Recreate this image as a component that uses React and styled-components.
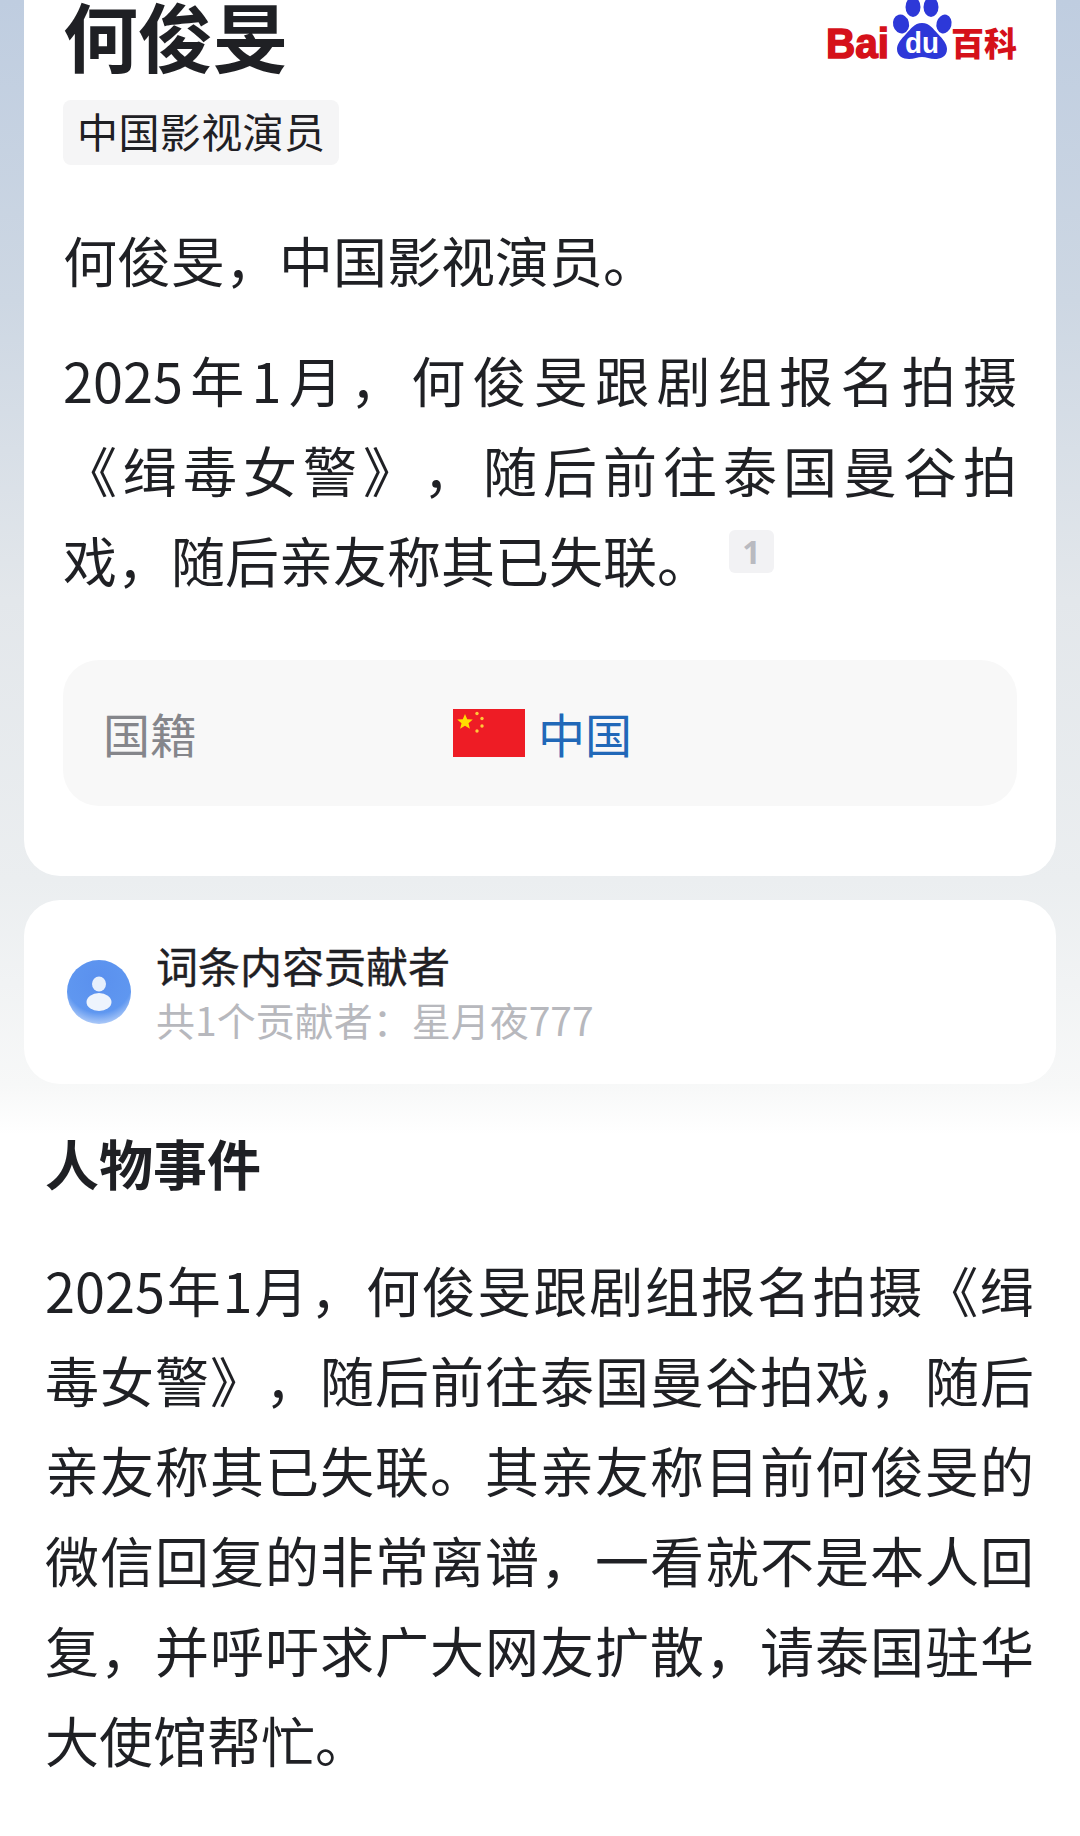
import styled, { createGlobalStyle } from "styled-components";

const GlobalStyle = createGlobalStyle`
  html, body {
    margin: 0;
    padding: 0;
    background: #fff;
  }
  body {
    font-family: "Noto Sans CJK SC", "Noto Sans", sans-serif;
    color: #1f2024;
    text-spacing-trim: space-all;
  }
`;

const Page = styled.div`
  width: 1080px;
  height: 1836px;
  overflow: hidden;
  background: linear-gradient(
    180deg,
    #bfcde0 0,
    #cdd7e3 300px,
    #e3e7eb 600px,
    #ebeef0 880px,
    #f7f8f8 1085px,
    #ffffff 1135px
  );
`;

const Cards = styled.div`
  padding: 0 24px;
  display: flex;
  flex-direction: column;
  gap: 24px;
`;

const Card = styled.section`
  background: #fff;
  border-radius: 0 0 36px 36px;
  padding: 0 39px 70px;
`;

const Header = styled.div`
  display: flex;
  justify-content: space-between;
  align-items: flex-start;
`;

const Title = styled.h1`
  margin: 0;
  font-size: 75px;
  line-height: 70px;
  font-weight: 700;
`;

const Tag = styled.span`
  display: inline-block;
  margin-top: 30px;
  height: 65px;
  line-height: 60px;
  padding: 0 14px;
  border-radius: 8px;
  background: #f5f5f6;
  font-size: 41px;
  letter-spacing: 0.4px;
  vertical-align: top;
`;

const TagRow = styled.div`
  height: 95px;
`;

const Text = styled.div`
  margin-top: ${(p) => p.$top || 0}px;
  font-size: 54px;
`;

const Line = styled.div`
  height: 90px;
  line-height: 90px;
  white-space: nowrap;
  text-align: justify;
  text-align-last: ${(p) => (p.$last ? "left" : "justify")};
`;

const Ref = styled.span`
  display: inline-block;
  width: 45px;
  height: 43px;
  margin-left: 18px;
  border-radius: 6px;
  background: #f2f2f4;
  color: #b9bac0;
  font-family: "Open Sans", sans-serif;
  font-size: 32px;
  font-weight: 700;
  line-height: 43px;
  text-align: center;
  text-align-last: center;
  vertical-align: 19px;
`;

const InfoBox = styled.div`
  margin-top: 55px;
  height: 146px;
  border-radius: 36px;
  background: #f8f8f8;
  display: grid;
  grid-template-columns: 350px 1fr;
  align-items: center;
  padding-left: 40px;
  font-size: 47px;
  line-height: 60px;
`;

const InfoLabel = styled.span`
  color: #85868b;
`;

const InfoValue = styled.span`
  display: flex;
  align-items: center;
  gap: 13px;
  color: #2168b8;
`;

const ContributorCard = styled.section`
  background: #fff;
  border-radius: 36px;
  height: 184px;
  display: flex;
  align-items: center;
  gap: 25px;
  padding-left: 43px;
`;

const ContributorText = styled.div`
  display: flex;
  flex-direction: column;
`;

const ContributorTitle = styled.div`
  font-size: 42px;
  line-height: 54px;
  -webkit-text-stroke: 0.4px #1f2024;
`;

const ContributorSub = styled.div`
  font-size: 39px;
  line-height: 54px;
  color: #b7b8bd;
`;

const Section = styled.section`
  padding: 44px 46px 0 45px;
`;

const SectionTitle = styled.h2`
  margin: 0;
  font-size: 54px;
  line-height: 70px;
  font-weight: 700;
`;

const Flag = () => (
  <svg width="72" height="48" viewBox="0 0 72 48">
    <rect width="72" height="48" fill="#ee1c25" />
    <polygon
      points="12,5 14.2,10.2 19.8,10.6 15.5,14.2 16.9,19.7 12,16.7 7.1,19.7 8.5,14.2 4.2,10.6 9.8,10.2"
      fill="#ffde00"
    />
    <g fill="#ffc93a">
      <circle cx="24" cy="4.5" r="1.7" />
      <circle cx="29" cy="9.5" r="1.7" />
      <circle cx="29" cy="17" r="1.7" />
      <circle cx="24" cy="22" r="1.7" />
    </g>
  </svg>
);

const BaiduLogo = () => (
  <svg width="191" height="60" viewBox="0 0 191 60">
    <text
      x="0"
      y="58"
      fontFamily="Liberation Sans, sans-serif"
      fontWeight="700"
      fontSize="43"
      fill="#d5111a"
      stroke="#d5111a"
      strokeWidth="1.6"
      textLength="63"
      lengthAdjust="spacingAndGlyphs"
    >
      Bai
    </text>
    <g fill="#2d38d8">
      <ellipse cx="75" cy="24" rx="8" ry="9.5" transform="rotate(-15 75 24)" />
      <ellipse cx="87" cy="7" rx="7.5" ry="10" />
      <ellipse cx="105" cy="7" rx="7.5" ry="10" />
      <ellipse cx="118" cy="24" rx="7.5" ry="9.5" transform="rotate(15 118 24)" />
      <path d="M96 23c8 0 11 6 16 11 5 5 9 10 9 15 0 8-7 10-12 10-5 0-9-2-13-2s-8 2-13 2c-6 0-12-3-12-10 0-5 4-10 9-15 5-5 8-11 16-11z" />
    </g>
    <text
      x="96"
      y="53"
      fontFamily="Liberation Sans, sans-serif"
      fontWeight="700"
      fontSize="29"
      fill="#fff"
      textAnchor="middle"
      textLength="34"
      lengthAdjust="spacingAndGlyphs"
    >
      du
    </text>
    <text
      x="125"
      y="56"
      fontFamily="Noto Sans CJK SC, sans-serif"
      fontWeight="900"
      fontSize="33"
      fill="#d5111a"
    >
      百科
    </text>
  </svg>
);

const Avatar = () => (
  <svg width="64" height="64" viewBox="0 0 64 64">
    <defs>
      <radialGradient id="avatarFill" cx="50%" cy="30%" r="75%">
        <stop offset="0" stopColor="#5a90ee" />
        <stop offset="0.7" stopColor="#5f97f0" />
        <stop offset="1" stopColor="#c3d8fa" />
      </radialGradient>
    </defs>
    <circle cx="32" cy="32" r="32" fill="url(#avatarFill)" />
    <ellipse cx="32" cy="24" rx="7" ry="7.5" fill="#e6effc" />
    <ellipse cx="32" cy="42" rx="12.5" ry="9" fill="#eef4fd" />
  </svg>
);

export default function App() {
  return (
    <>
      <GlobalStyle />
      <Page>
        <Cards>
          <Card>
            <Header>
              <Title>何俊旻</Title>
              <BaiduLogo />
            </Header>
            <TagRow>
              <Tag>中国影视演员</Tag>
            </TagRow>
            <Text $top={50}>
              <Line $last>{"何俊旻\uFF0C中国影视演员。"}</Line>
            </Text>
            <Text $top={30}>
              <Line>{"2025年1月\uFF0C何俊旻跟剧组报名拍摄"}</Line>
              <Line>{"《缉毒女警》\uFF0C随后前往泰国曼谷拍"}</Line>
              <Line $last>
                {"戏\uFF0C随后亲友称其已失联。"}
                <Ref>1</Ref>
              </Line>
            </Text>
            <InfoBox>
              <InfoLabel>国籍</InfoLabel>
              <InfoValue>
                <Flag />
                中国
              </InfoValue>
            </InfoBox>
          </Card>
          <ContributorCard>
            <Avatar />
            <ContributorText>
              <ContributorTitle>词条内容贡献者</ContributorTitle>
              <ContributorSub>{"共1个贡献者\uFF1A星月夜777"}</ContributorSub>
            </ContributorText>
          </ContributorCard>
        </Cards>
        <Section>
          <SectionTitle>人物事件</SectionTitle>
          <Text $top={47}>
            <Line>{"2025年1月\uFF0C何俊旻跟剧组报名拍摄《缉"}</Line>
            <Line>{"毒女警》\uFF0C随后前往泰国曼谷拍戏\uFF0C随后"}</Line>
            <Line>亲友称其已失联。其亲友称目前何俊旻的</Line>
            <Line>{"微信回复的非常离谱\uFF0C一看就不是本人回"}</Line>
            <Line>{"复\uFF0C并呼吁求广大网友扩散\uFF0C请泰国驻华"}</Line>
            <Line $last>大使馆帮忙。</Line>
          </Text>
        </Section>
      </Page>
    </>
  );
}
